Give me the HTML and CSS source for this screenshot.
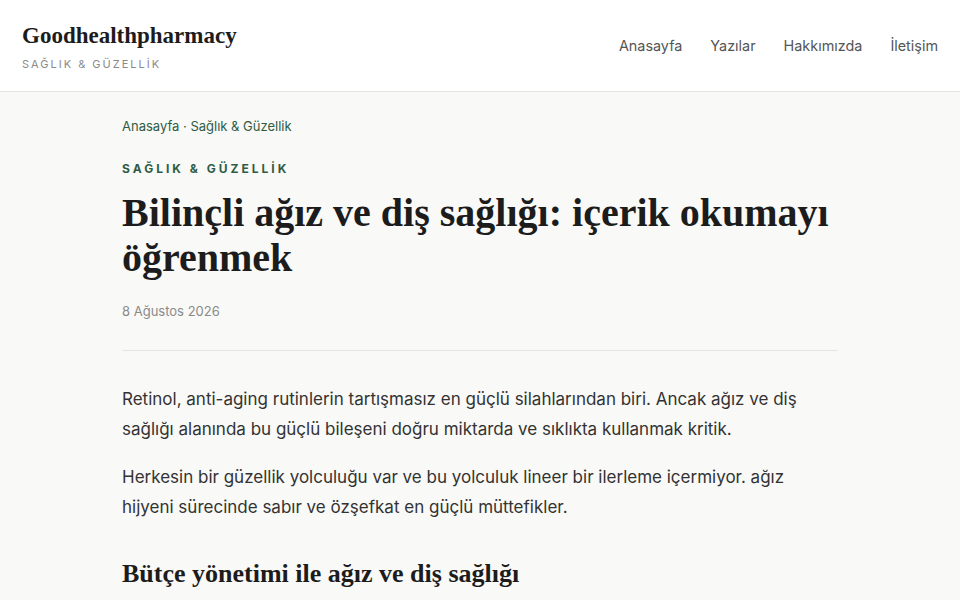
FILE: index.html
```html
<!DOCTYPE html>
<html lang="tr">
<head>
<meta charset="utf-8">
<title>Goodhealthpharmacy</title>
<link rel="stylesheet" href="styles.css">
</head>
<body>
<header class="site-header">
  <div class="brand">
    <div class="brand-name">Goodhealthpharmacy</div>
    <div class="brand-tag">SAĞLIK &amp; GÜZELLİK</div>
  </div>
  <nav class="nav">
    <a href="#">Anasayfa</a>
    <a href="#">Yazılar</a>
    <a href="#">Hakkımızda</a>
    <a href="#">İletişim</a>
  </nav>
</header>
<main class="article">
  <div class="crumbs"><a href="#">Anasayfa</a> · <a href="#">Sağlık &amp; Güzellik</a></div>
  <div class="category">SAĞLIK &amp; GÜZELLİK</div>
  <h1 class="title">Bilinçli ağız ve diş sağlığı: içerik okumayı öğrenmek</h1>
  <div class="date">8 Ağustos 2026</div>
  <hr class="rule">
  <p>Retinol, anti-aging rutinlerin tartışmasız en güçlü silahlarından biri. Ancak ağız ve diş sağlığı alanında bu güçlü bileşeni doğru miktarda ve sıklıkta kullanmak kritik.</p>
  <p>Herkesin bir güzellik yolculuğu var ve bu yolculuk lineer bir ilerleme içermiyor. ağız hijyeni sürecinde sabır ve özşefkat en güçlü müttefikler.</p>
  <h2 class="subtitle">Bütçe yönetimi ile ağız ve diş sağlığı</h2>
</main>
</body>
</html>
```
FILE: styles.css
```css
* { box-sizing: border-box; }
html, body { margin: 0; padding: 0; }
body {
  background: #f9f9f7;
  font-family: Inter, "Noto Sans", sans-serif;
  color: #2a2a2a;
}
a { color: inherit; text-decoration: none; }
.site-header {
  background: #ffffff;
  border-bottom: 1px solid #e4e4e2;
  height: 92px;
  padding: 0 22px;
  display: flex;
  align-items: center;
  justify-content: space-between;
}
.brand { padding-top: 1px; }
.brand-name {
  font-family: "Liberation Serif", serif;
  font-weight: 700;
  font-size: 23px;
  line-height: 28px;
  color: #1c1c1c;
}
.brand-tag {
  margin-top: 7px;
  font-size: 11px;
  letter-spacing: 2px;
  color: #8a8a8a;
}
.nav {
  display: flex;
  gap: 28px;
  font-size: 14.4px;
  color: #555555;
}
.article {
  max-width: 716px;
  margin: 0 auto;
  padding-top: 25px;
}
.crumbs {
  font-size: 13px;
  line-height: 18px;
  color: #2f5c45;
}
.category {
  margin-top: 26px;
  font-size: 12px;
  font-weight: 700;
  letter-spacing: 3px;
  color: #2f5c45;
}
.title {
  margin: 14px 0 0;
  font-family: "Liberation Serif", serif;
  font-weight: 700;
  font-size: 40px;
  line-height: 45px;
  color: #1c1c1c;
}
.date {
  margin-top: 23px;
  font-size: 13px;
  color: #8a8a8a;
}
.rule {
  margin: 31px 0 0;
  border: 0;
  border-top: 1px solid #e4e4e2;
}
.article p {
  margin: 33px 0 0;
  font-size: 17px;
  line-height: 30px;
  color: #333333;
}
.article p + p { margin-top: 18px; }
.subtitle {
  margin: 37px 0 0;
  font-family: "Liberation Serif", serif;
  font-weight: 700;
  font-size: 26px;
  color: #1c1c1c;
}
```
